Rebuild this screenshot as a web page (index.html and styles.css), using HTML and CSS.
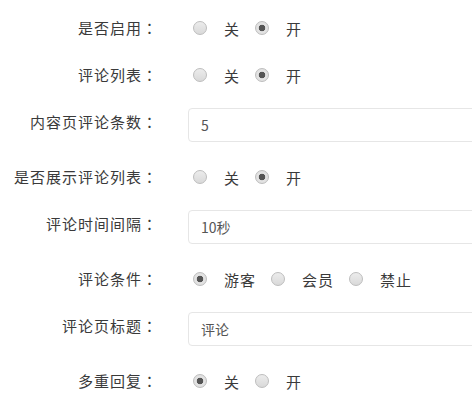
FILE: index.html
```html
<!DOCTYPE html>
<html lang="zh-CN">
<head>
    <meta charset="UTF-8">
    <meta name="viewport" content="width=device-width, initial-scale=1.0">
    <title>评论设置</title>
    <link rel="stylesheet" href="styles.css">
</head>
<body>

    <form class="setting-form">
        <!-- 是否启用 -->
        <div class="form-item">
            <label class="form-label">是否启用<span class="colon" lang="zh-TW">：</span></label>
            <div class="radio-group">
                <label class="radio-item"><input type="radio" name="enable" value="0"><span>关</span></label>
                <label class="radio-item"><input type="radio" name="enable" value="1" checked><span>开</span></label>
            </div>
        </div>

        <div class="form-item">
            <label class="form-label">评论列表<span class="colon" lang="zh-TW">：</span></label>
            <div class="radio-group">
                <label class="radio-item"><input type="radio" name="list" value="0"><span>关</span></label>
                <label class="radio-item"><input type="radio" name="list" value="1" checked><span>开</span></label>
            </div>
        </div>

        <div class="form-item input-item">
            <label class="form-label">内容页评论条数<span class="colon" lang="zh-TW">：</span></label>
            <input type="text" class="text-input" value="5">
        </div>

        <div class="form-item">
            <label class="form-label">是否展示评论列表<span class="colon" lang="zh-TW">：</span></label>
            <div class="radio-group">
                <label class="radio-item"><input type="radio" name="show" value="0"><span>关</span></label>
                <label class="radio-item"><input type="radio" name="show" value="1" checked><span>开</span></label>
            </div>
        </div>

        <div class="form-item input-item">
            <label class="form-label">评论时间间隔<span class="colon" lang="zh-TW">：</span></label>
            <input type="text" class="text-input" value="10秒">
        </div>

        <div class="form-item">
            <label class="form-label">评论条件<span class="colon" lang="zh-TW">：</span></label>
            <div class="radio-group">
                <label class="radio-item"><input type="radio" name="cond" value="guest" checked><span>游客</span></label>
                <label class="radio-item"><input type="radio" name="cond" value="member"><span>会员</span></label>
                <label class="radio-item"><input type="radio" name="cond" value="off"><span>禁止</span></label>
            </div>
        </div>

        <div class="form-item input-item">
            <label class="form-label">评论页标题<span class="colon" lang="zh-TW">：</span></label>
            <input type="text" class="text-input" value="评论">
        </div>

        <div class="form-item">
            <label class="form-label">多重回复<span class="colon" lang="zh-TW">：</span></label>
            <div class="radio-group">
                <label class="radio-item"><input type="radio" name="multi" value="0" checked><span>关</span></label>
                <label class="radio-item"><input type="radio" name="multi" value="1"><span>开</span></label>
            </div>
        </div>
    </form>

</body>
</html>
```

FILE: styles.css
```css
* {
    box-sizing: border-box;
    margin: 0;
    padding: 0;
}

body {
    font-family: 'Noto Sans CJK SC', sans-serif;
    background-color: #ffffff;
    color: #3a3a3a;
    padding-top: 12px;
    overflow: hidden;
}

.form-item {
    display: flex;
    margin-bottom: 15px;
}

.form-label {
    width: 158px;
    flex-shrink: 0;
    text-align: right;
    font-size: 15px;
    letter-spacing: 1px;
    line-height: 32px;
}

/* centred full-width colon */
.colon {
    font-family: 'Noto Sans CJK TC', sans-serif;
}

/* Input rows */
.input-item {
    padding-bottom: 4px;
}

.text-input {
    width: 320px;
    height: 34px;
    margin: 2px 0 0 30px;
    padding: 0 12px;
    border: 1px solid #e6e6e6;
    border-radius: 4px;
    font-family: 'Noto Sans CJK SC', sans-serif;
    font-size: 14px;
    color: #555;
    outline: none;
    flex-shrink: 0;
}

/* Radio rows */
.radio-group {
    display: flex;
    align-items: center;
    height: 32px;
    margin-left: 30px;
    padding-left: 5px;
}

.radio-item {
    display: flex;
    align-items: center;
    margin-right: 15px;
    font-size: 15px;
    letter-spacing: 1px;
    cursor: pointer;
}

.radio-item input {
    appearance: none;
    -webkit-appearance: none;
    width: 14px;
    height: 14px;
    margin-right: 17px;
    border: 1px solid #bdbdbd;
    border-radius: 50%;
    background: linear-gradient(#ececec, #d9d9d9);
    cursor: pointer;
}

.radio-item input:checked {
    background: radial-gradient(circle, #555 0, #555 3px, #e4e4e4 3.6px, #dcdcdc 100%);
}
```
